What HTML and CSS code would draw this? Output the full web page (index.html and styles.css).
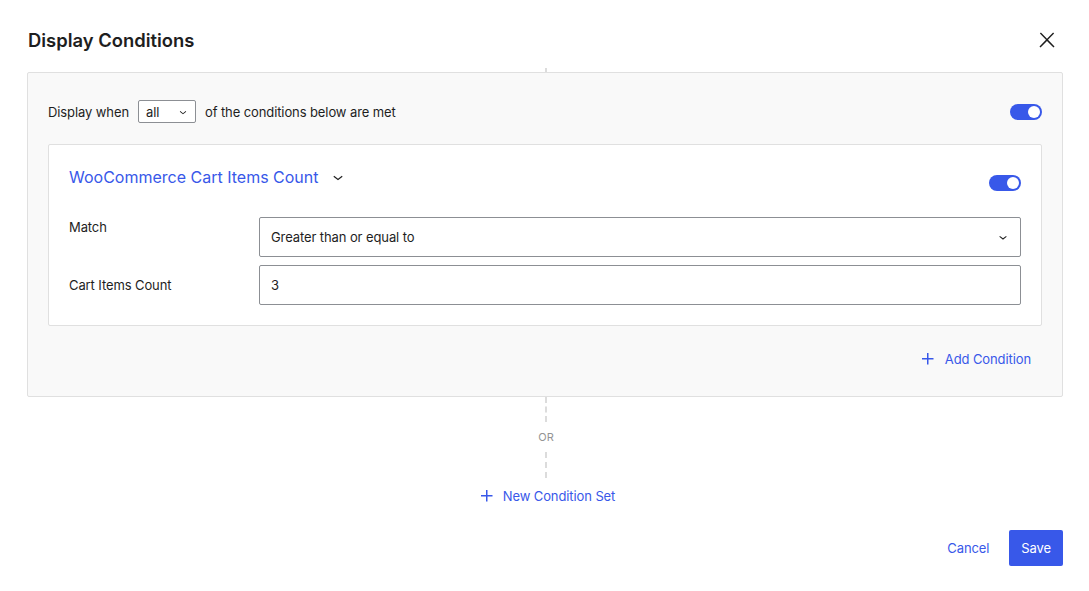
FILE: index.html
```html
<!DOCTYPE html>
<html lang="en">
<head>
<meta charset="utf-8">
<title>Display Conditions</title>
<link rel="stylesheet" href="styles.css">
</head>
<body>
<div class="modal">
  <div class="header">
    <h1 class="title">Display Conditions</h1>
    <button class="close" aria-label="Close">
      <svg viewBox="0 0 24 24" width="24" height="24"><path d="M13 11.8l6.1-6.3-1-1-6.1 6.2-6.1-6.2-1 1 6.1 6.3-6.5 6.7 1 1 6.5-6.6 6.5 6.6 1-1z"/></svg>
    </button>
  </div>
  <div class="connector connector-top"></div>
  <div class="panel">
    <div class="when-row">
      <div class="when">
        <span>Display when</span>
        <div class="mini-select"><span>all</span>
          <svg viewBox="0 0 24 24" width="16" height="16"><path d="M17.5 11.6L12 16l-5.5-4.4.9-1.2L12 14l4.6-3.6.9 1.2z"/></svg>
        </div>
        <span>of the conditions below are met</span>
      </div>
      <div class="toggle"><span class="thumb"></span></div>
    </div>
    <div class="card">
      <div class="card-head">
        <div class="card-title">WooCommerce Cart Items Count
          <svg viewBox="0 0 24 24" width="20" height="20"><path d="M17.5 11.6L12 16l-5.5-4.4.9-1.2L12 14l4.6-3.6.9 1.2z"/></svg>
        </div>
        <div class="toggle toggle-card"><span class="thumb"></span></div>
      </div>
      <div class="field field-top">
        <label class="label">Match</label>
        <div class="control select"><span>Greater than or equal to</span>
          <svg viewBox="0 0 24 24" width="18" height="18"><path d="M17.5 11.6L12 16l-5.5-4.4.9-1.2L12 14l4.6-3.6.9 1.2z"/></svg>
        </div>
      </div>
      <div class="field">
        <label class="label">Cart Items Count</label>
        <div class="control"><span>3</span></div>
      </div>
    </div>
    <div class="add-row">
      <button class="link-btn add-btn">
        <svg viewBox="0 0 24 24" width="24" height="24"><path d="M11 12.5V17.5H12.5V12.5H17.5V11H12.5V6H11V11H6V12.5H11Z"/></svg>
        <span>Add Condition</span>
      </button>
    </div>
  </div>
  <div class="connector connector-a"></div>
  <div class="or">OR</div>
  <div class="connector connector-b"></div>
  <div class="new-row">
    <button class="link-btn">
      <svg viewBox="0 0 24 24" width="24" height="24"><path d="M11 12.5V17.5H12.5V12.5H17.5V11H12.5V6H11V11H6V12.5H11Z"/></svg>
      <span>New Condition Set</span>
    </button>
  </div>
  <div class="footer">
    <button class="link-btn cancel">Cancel</button>
    <button class="primary">Save</button>
  </div>
</div>
</body>
</html>
```

FILE: styles.css
```css
* { box-sizing: border-box; }
html, body { margin: 0; padding: 0; background: #fff; }
body {
  font-family: Inter, "Noto Sans", "Liberation Sans", sans-serif;
  font-size: 13px;
  letter-spacing: -0.1px;
  color: #1e1e1e;
}
button { font-family: inherit; font-size: 13px; letter-spacing: inherit; border: 0; background: none; cursor: pointer; padding: 0; }

.modal { width: 1089px; padding: 0 26px 0 27px; }

.header {
  height: 68px;
  padding-top: 12px;
  display: flex;
  align-items: center;
  justify-content: space-between;
}
.title {
  margin: 0 0 0 1px;
  font-size: 18.4px;
  font-weight: 600;
  letter-spacing: 0;
  line-height: 28px;
  color: #1e1e1e;
}
.close { width: 24px; height: 24px; margin-right: 4px; display: flex; }
.close svg { fill: #1e1e1e; }

.connector {
  width: 0;
  margin: 0 auto;
  border-left: 2px dashed #dcdcdc;
  position: relative;
  left: 1px;
}
.connector-top { height: 4px; }
.connector-a { height: 25px; }
.connector-b { height: 26px; }

.panel {
  background: #f9f9f9;
  border: 1px solid #e0e0e0;
  border-radius: 2px;
  padding: 27px 20px 19px 20px;
}
.when-row {
  display: flex;
  align-items: center;
  justify-content: space-between;
  height: 23px;
}
.when { display: flex; align-items: center; gap: 9px; color: #1e1e1e; }
.mini-select {
  width: 58px;
  height: 23px;
  border: 1px solid #8c8f94;
  border-radius: 2px;
  background: #fff;
  display: flex;
  align-items: center;
  justify-content: space-between;
  padding: 1px 5px 0 7px;
}
.mini-select svg { fill: #1e1e1e; width: 14px; height: 14px; }

.toggle {
  width: 32px;
  height: 16px;
  border-radius: 8px;
  background: #3858e9;
  display: flex;
  align-items: center;
  justify-content: flex-end;
  padding: 0 2px;
}
.thumb { width: 12px; height: 12px; border-radius: 50%; background: #fff; }

.card {
  margin-top: 21px;
  background: #fff;
  border: 1px solid #e0e0e0;
  border-radius: 2px;
  padding: 20px 20px 20px 20px;
}
.card-head {
  display: flex;
  justify-content: space-between;
  align-items: flex-start;
  height: 52px;
}
.card-title {
  display: flex;
  align-items: center;
  gap: 9px;
  font-size: 16px;
  letter-spacing: 0;
  line-height: 24px;
  color: #3858e9;
}
.card-title svg { fill: #1e1e1e; }
.toggle-card { margin-top: 10px; }

.field {
  display: grid;
  grid-template-columns: 190px 1fr;
  align-items: center;
}
.field + .field { margin-top: 8px; }
.field-top { align-items: start; }
.field-top .label { line-height: 20px; }
.label { color: #1e1e1e; }
.control {
  height: 40px;
  border: 1px solid #8c8f94;
  border-radius: 2px;
  background: #fff;
  display: flex;
  align-items: center;
  justify-content: space-between;
  padding: 0 9px 0 11px;
}
.control svg { fill: #1e1e1e; width: 16px; height: 16px; }

.add-row {
  display: flex;
  justify-content: flex-end;
  margin-top: 15px;
}
.link-btn {
  height: 36px;
  display: flex;
  align-items: center;
  gap: 4px;
  color: #3858e9;
  padding: 0 12px 0 6px;
}
.link-btn svg { fill: #3858e9; }
.add-btn { padding-right: 11px; gap: 5px; }

.or {
  text-align: center;
  font-size: 11px;
  line-height: 30px;
  color: #949494;
  position: relative;
  left: 1px;
}
.new-row { display: flex; justify-content: center; }
.new-row .link-btn { padding: 0 6px 0 6px; }

.footer {
  margin-top: 16px;
  display: flex;
  justify-content: flex-end;
  align-items: center;
  gap: 8px;
}
.cancel { padding: 0 12px; }
.primary {
  height: 36px;
  padding: 0 12px;
  background: #3858e9;
  color: #fff;
  border-radius: 2px;
}
```
